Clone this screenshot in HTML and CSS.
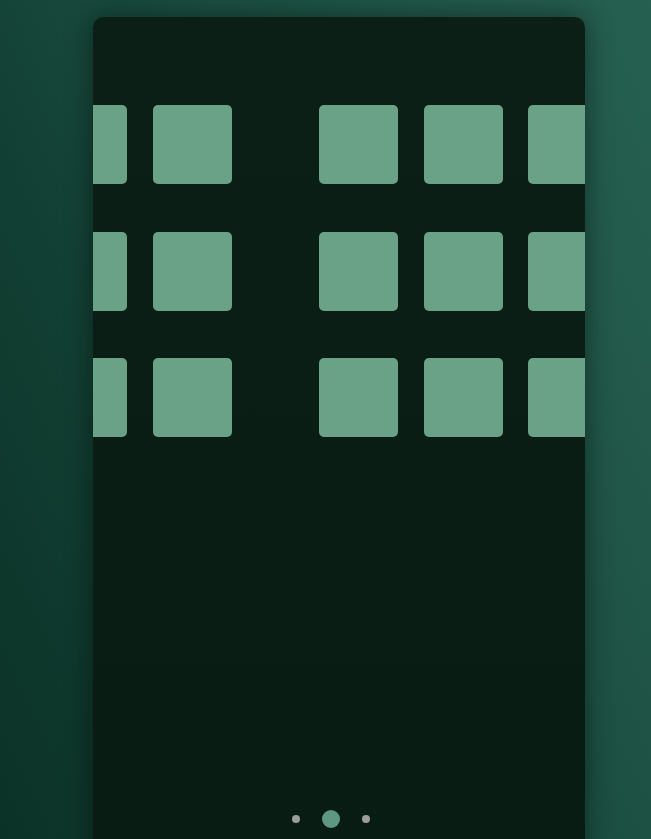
FILE: index.html
```html
<!DOCTYPE html>
<html>
<head>
<meta charset="utf-8">
<link rel="stylesheet" href="styles.css">
</head>
<body>
<div class="stage">
  <div class="phone">
    <div class="viewport">
      <div class="track">
        <div class="page">
          <div class="tile"></div><div class="tile"></div><div class="tile"></div><div class="tile"></div>
          <div class="tile"></div><div class="tile"></div><div class="tile"></div><div class="tile"></div>
          <div class="tile"></div><div class="tile"></div><div class="tile"></div><div class="tile"></div>
        </div>
        <div class="page">
          <div class="tile"></div><div class="tile"></div><div class="tile"></div><div class="tile"></div>
          <div class="tile"></div><div class="tile"></div><div class="tile"></div><div class="tile"></div>
          <div class="tile"></div><div class="tile"></div><div class="tile"></div><div class="tile"></div>
        </div>
      </div>
    </div>
    <div class="dots">
      <span class="dot"></span>
      <span class="dot active"></span>
      <span class="dot"></span>
    </div>
  </div>
</div>
</body>
</html>
```
FILE: styles.css
```css
html, body {
  margin: 0;
  padding: 0;
  height: 100%;
}
body {
  overflow: hidden;
  background: linear-gradient(65deg, #0b3227 0%, #123f33 30%, #1a4e40 55%, #22594a 80%, #256050 100%);
  font-family: "Liberation Sans", sans-serif;
}
.stage {
  height: 839px;
  display: flex;
  justify-content: flex-start;
  padding-top: 17px;
  padding-left: 93px;
  box-sizing: border-box;
  overflow: hidden;
}
.phone {
  width: 492px;
  height: 840px;
  flex: none;
  background: linear-gradient(180deg, #0b1f17 0%, #091c14 100%);
  border-radius: 10px;
  box-shadow: 0 0 28px rgba(0, 0, 0, 0.45);
  overflow: hidden;
  display: flex;
  flex-direction: column;
  box-sizing: border-box;
  padding-top: 88px;
}
.viewport {
  overflow: hidden;
}
.track {
  display: flex;
  margin-left: -297.5px;
}
.page {
  flex: none;
  width: 480px;
  box-sizing: border-box;
  padding: 0 43.75px;
  display: grid;
  grid-template-columns: repeat(4, 79px);
  column-gap: 25.5px;
  row-gap: 47.5px;
}
.tile {
  width: 79px;
  height: 79px;
  border-radius: 5px;
  background: #6aa287;
}
.dots {
  margin-top: auto;
  margin-bottom: 29px;
  display: flex;
  justify-content: center;
  align-items: center;
  gap: 22px;
  padding-right: 16px;
}
.dot {
  width: 8px;
  height: 8px;
  border-radius: 50%;
  background: #9a9d9b;
}
.dot.active {
  width: 18px;
  height: 18px;
  background: #5f9880;
}
```
